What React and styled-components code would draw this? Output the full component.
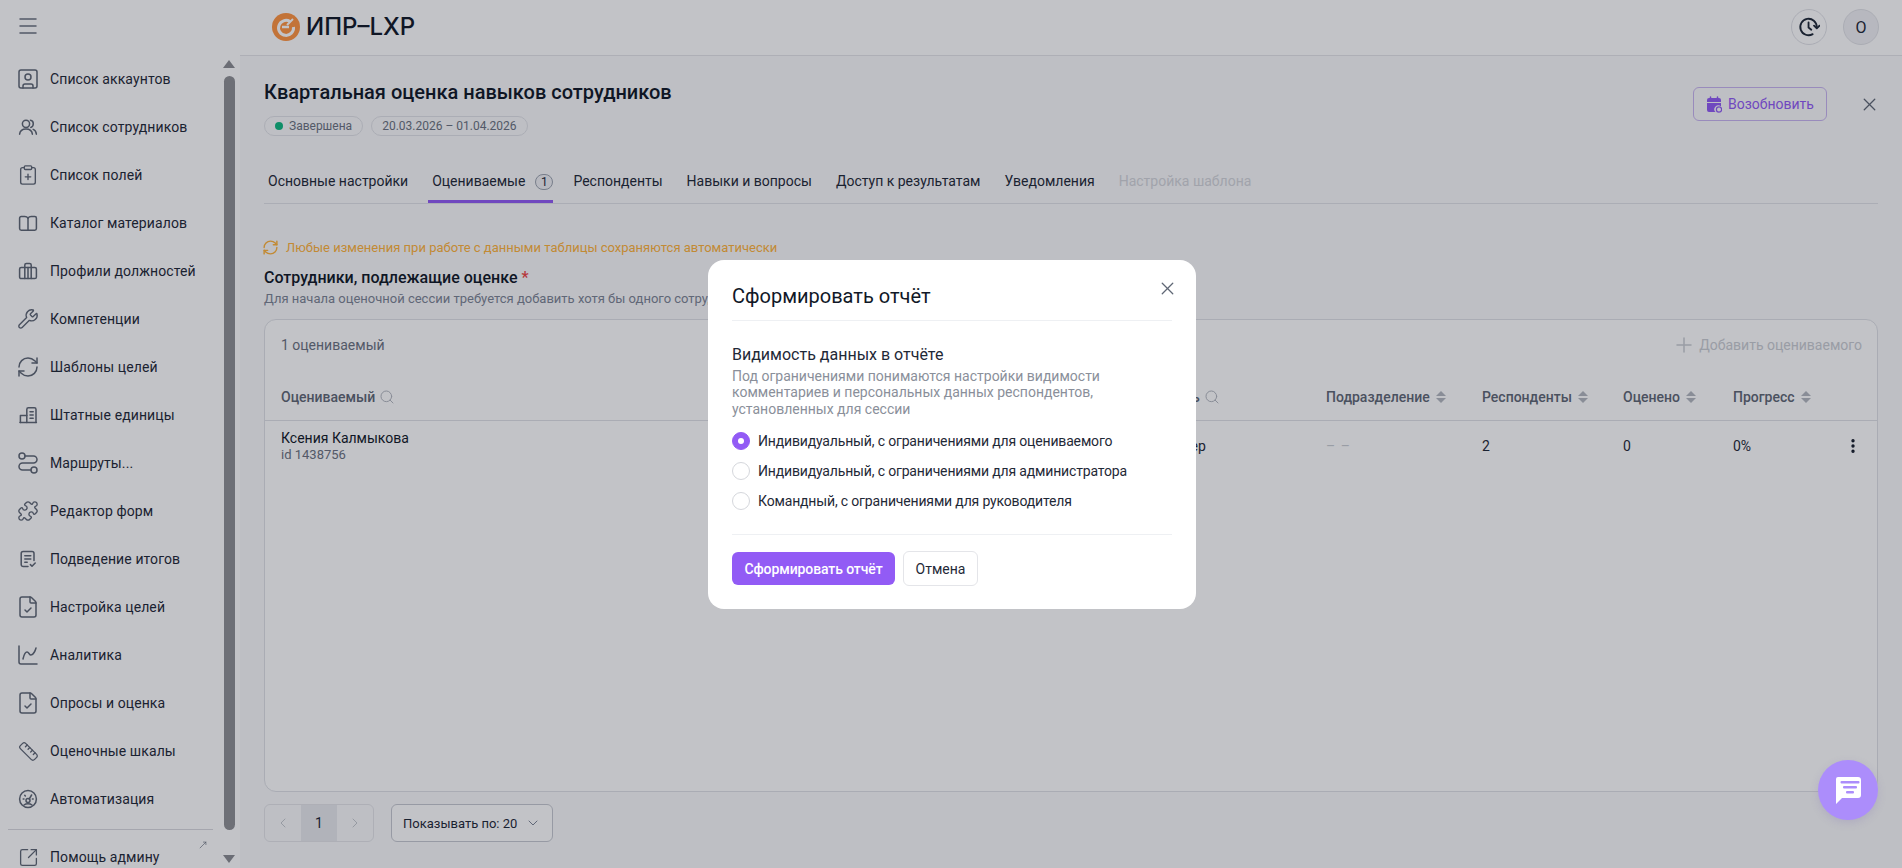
import React from 'react';
import styled, { createGlobalStyle } from 'styled-components';
import {
  ChartSpline,
  ChevronDown,
  ChevronLeft,
  ChevronRight,
  ClipboardPlus,
  EllipsisVertical,
  FileCheck,
  Menu,
  MoveUpRight,
  Plus,
  Puzzle,
  RefreshCw,
  Route,
  Ruler,
  Search,
  SquareArrowOutUpRight,
  SquareUser,
  Wrench,
  X,
} from 'lucide-react';

const GlobalStyle = createGlobalStyle`
  html, body {
    margin: 0;
    height: 100%;
    overflow: hidden;
    font-family: Roboto, "Noto Sans", sans-serif;
    color: #111827;
    background: #fff;
  }
  * { box-sizing: border-box; }
`;

const Layout = styled.div`
  display: grid;
  grid-template-columns: 240px 1fr;
  height: 868px;
  overflow: hidden;
`;

const Sidebar = styled.aside`
  display: flex;
  flex-direction: column;
  height: 868px;
  background: #fff;
  overflow: hidden;
`;

const SideTop = styled.div`
  height: 55px;
  flex: none;
  padding: 14px 0 0 16px;
  color: #6b7280;
`;

const SideBody = styled.div`
  display: flex;
  flex: 1;
  min-height: 0;
`;

const Nav = styled.nav`
  width: 222px;
  flex: none;
`;

const NavItem = styled.a`
  display: flex;
  align-items: center;
  position: relative;
  gap: 10px;
  height: 48px;
  padding-left: 16px;
  font-size: 14px;
  color: #1f2937;
  letter-spacing: 0.1px;
  svg { flex: none; color: #5f6775; }
`;

const IconSlot = styled.span`
  width: 24px;
  height: 24px;
  flex: none;
  display: flex;
  align-items: center;
  justify-content: center;
`;

const NavDivider = styled.div`
  height: 1px;
  margin: 6px 9px 3px 8px;
  background: #d8d9de;
`;

const NavCorner = styled.span`
  position: absolute;
  top: 7px;
  right: 14px;
  display: flex;
`;

const ScrollTrack = styled.div`
  width: 18px;
  display: flex;
  flex-direction: column;
  align-items: center;
  padding: 5px 4px 0 0;
`;

const ScrollArrow = styled.span`
  width: 0;
  height: 0;
  flex: none;
  border-left: 6.5px solid transparent;
  border-right: 6.5px solid transparent;
  border-bottom: ${(p) => (p.$down ? 'none' : '8px solid #8b8d92')};
  border-top: ${(p) => (p.$down ? '8px solid #8b8d92' : 'none')};
`;

const ScrollThumb = styled.div`
  width: 11px;
  height: 754px;
  flex: none;
  margin: 8px 0 25px;
  border-radius: 6px;
  background: #8f9095;
`;

const Main = styled.main`
  display: flex;
  flex-direction: column;
  min-width: 0;
  background: #fafafb;
`;

const Header = styled.header`
  height: 56px;
  flex: none;
  display: flex;
  align-items: center;
  justify-content: space-between;
  padding: 0 23px 1px 32px;
  background: #fff;
  border-bottom: 1px solid #e4e5e9;
`;

const Logo = styled.div`
  display: flex;
  align-items: center;
  gap: 6px;
`;

const LogoText = styled.span`
  font-family: Inter, Roboto, sans-serif;
  font-size: 24px;
  font-weight: 500;
  line-height: 28px;
  color: #111827;
`;

const HeaderActions = styled.div`
  display: flex;
  gap: 16px;
`;

const RoundButton = styled.div`
  width: 36px;
  height: 36px;
  display: flex;
  align-items: center;
  justify-content: center;
  border-radius: 50%;
  border: 1px solid #e0e1e6;
  background: ${(p) => (p.$filled ? '#f0f1f4' : '#fff')};
  color: #1f2937;
  font-size: 16px;
`;

const Content = styled.div`
  flex: 1;
  display: flex;
  flex-direction: column;
  padding: 24px 24px 0;
`;

const TitleRow = styled.div`
  display: flex;
  justify-content: space-between;
  align-items: flex-start;
`;

const Title = styled.h1`
  margin: 0;
  font-size: 20px;
  line-height: 24px;
  font-weight: 500;
  color: #111827;
`;

const Chips = styled.div`
  display: flex;
  gap: 8px;
  margin-top: 12px;
`;

const Chip = styled.span`
  display: inline-flex;
  align-items: center;
  gap: 6px;
  height: 20px;
  padding: 0 10px;
  border: 1px solid #e1e2e7;
  border-radius: 10px;
  font-size: 12px;
  color: #6b7280;
`;

const Dot = styled.i`
  width: 8px;
  height: 8px;
  border-radius: 50%;
  background: #10b981;
`;

const TitleActions = styled.div`
  display: flex;
  align-items: center;
  gap: 32px;
  margin: 7px -2px 0 0;
  color: #5f6775;
`;

const ResumeButton = styled.button`
  display: flex;
  align-items: center;
  gap: 6px;
  width: 134px;
  height: 34px;
  padding: 0 12px;
  border: 1px solid #c9b5f0;
  border-radius: 6px;
  background: transparent;
  font: 14px Roboto, sans-serif;
  color: #925bf5;
`;

const Tabs = styled.div`
  display: flex;
  height: 44px;
  margin-top: 24px;
  border-bottom: 1px solid #e1e2e7;
`;

const Tab = styled.div`
  display: flex;
  align-items: flex-start;
  gap: 10px;
  height: 43px;
  margin-right: 16px;
  padding: 13px ${(p) => (p.$active ? '0' : '4px')} 0 4px;
  font-size: 14px;
  line-height: 16px;
  color: ${(p) => (p.$disabled ? '#d3d5da' : '#1f2937')};
  border-bottom: 3px solid ${(p) => (p.$active ? '#925bf5' : 'transparent')};
`;

const TabCount = styled.span`
  width: 18px;
  height: 16px;
  margin-top: 1px;
  display: flex;
  align-items: center;
  justify-content: center;
  border: 1px solid #9ca3af;
  border-radius: 9px;
  font-size: 12px;
  background: #f0f1f4;
`;

const Notice = styled.div`
  display: flex;
  align-items: center;
  gap: 7px;
  margin: 33px 0 0 -2px;
  height: 20px;
  font-size: 13px;
  color: #ffb33b;
`;

const SectionTitle = styled.h2`
  margin: 11px 0 0;
  font-size: 16px;
  line-height: 20px;
  font-weight: 500;
  color: #111827;
  em { color: #ef4444; font-style: normal; }
`;

const SectionHint = styled.p`
  margin: 3px 0 12px;
  font-size: 13px;
  line-height: 16px;
  color: #7c8494;
`;

const TableCard = styled.section`
  height: 473px;
  flex: none;
  background: #fff;
  border: 1px solid #dfe1e6;
  border-radius: 12px;
`;

const CardBar = styled.div`
  height: 49px;
  display: flex;
  align-items: center;
  justify-content: space-between;
  padding: 0 15px 0 16px;
  font-size: 14px;
  color: #6b7280;
`;

const AddButton = styled.span`
  display: flex;
  align-items: center;
  gap: 3px;
  color: #c9ccd2;
`;

const TableRow = styled.div`
  display: grid;
  grid-template-columns: 843px 202px 156px 141px 110px 1fr;
  align-items: center;
  padding-left: 16px;
  height: ${(p) => p.$height}px;
  border-bottom: ${(p) => (p.$head ? '1px solid #dfe1e6' : 'none')};
  font-size: 14px;
  font-weight: ${(p) => (p.$head ? 500 : 400)};
  color: ${(p) => (p.$head ? '#5f6775' : '#1f2937')};
`;

const HeadCell = styled.span`
  display: flex;
  align-items: center;
  gap: 4px;
  padding-top: 5px;
  svg { color: #b3b7bf; }
`;

const SortMark = styled.span`
  display: flex;
  flex-direction: column;
  gap: 2px;
  margin-left: 2px;
  &::before, &::after {
    content: '';
    width: 0;
    height: 0;
    border-left: 5px solid transparent;
    border-right: 5px solid transparent;
  }
  &::before { border-bottom: 5px solid #b3b7bf; }
  &::after { border-top: 5px solid #b3b7bf; }
`;

const PersonName = styled.div`
  font-size: 14px;
  line-height: 16px;
  color: #111827;
`;

const PersonId = styled.div`
  margin-top: 1px;
  font-size: 13px;
  line-height: 16px;
  color: #6b7280;
`;

const Muted = styled.span`
  color: #c9ccd2;
  letter-spacing: 1px;
`;

const ProgressRow = styled.div`
  display: flex;
  align-items: center;
  justify-content: space-between;
`;

const RowMenu = styled.span`
  display: flex;
  justify-content: flex-end;
  padding-right: 15px;
  color: #111827;
`;

const Footer = styled.div`
  display: flex;
  gap: 17px;
  margin-top: 12px;
`;

const Pager = styled.div`
  display: flex;
  width: 110px;
  height: 38px;
  border: 1px solid #e4e5e9;
  border-radius: 6px;
  overflow: hidden;
  color: #c5c8ce;
`;

const PageCell = styled.span`
  flex: 1;
  display: flex;
  align-items: center;
  justify-content: center;
  font-size: 14px;
  color: ${(p) => (p.$current ? '#1f2937' : 'inherit')};
  background: ${(p) => (p.$current ? '#e9eaee' : 'transparent')};
`;

const PageSize = styled.div`
  display: flex;
  align-items: center;
  gap: 8px;
  width: 162px;
  height: 38px;
  padding: 0 11px;
  white-space: nowrap;
  background: #fff;
  border: 1px solid #c6c9d0;
  border-radius: 6px;
  font-size: 13px;
  color: #1f2937;
  svg { flex: none; color: #7c8494; }
`;

const Overlay = styled.div`
  position: fixed;
  inset: 0;
  z-index: 10;
  display: flex;
  align-items: center;
  justify-content: center;
  padding-left: 2px;
  background: rgba(11, 15, 31, 0.25);
`;

const Modal = styled.div`
  position: relative;
  width: 488px;
  height: 349px;
  padding: 20px 24px 0;
  background: #fff;
  border-radius: 16px;
`;

const ModalClose = styled.span`
  position: absolute;
  top: 18px;
  right: 18px;
  display: flex;
  color: #5f6775;
`;

const ModalTitle = styled.h3`
  margin: 0;
  height: 41px;
  font-size: 20px;
  line-height: 32px;
  font-weight: 400;
  color: #111827;
  border-bottom: 1px solid #eef0f3;
`;

const FieldLabel = styled.div`
  margin-top: 24px;
  font-size: 16px;
  line-height: 20px;
  color: #1f2937;
`;

const FieldHint = styled.p`
  margin: 3px 0 0;
  font-size: 14px;
  line-height: 16.5px;
  color: #8a8f9a;
`;

const RadioList = styled.div`
  display: flex;
  flex-direction: column;
  gap: 12px;
  margin-top: 15px;
`;

const RadioRow = styled.label`
  display: flex;
  align-items: center;
  gap: 8px;
  height: 18px;
  font-size: 14px;
  letter-spacing: -0.16px;
  color: #1f2937;
`;

const RadioMark = styled.span`
  width: 18px;
  height: 18px;
  flex: none;
  display: flex;
  align-items: center;
  justify-content: center;
  border-radius: 50%;
  border: 1px solid ${(p) => (p.$checked ? '#925bf5' : '#d5d7dc')};
  background: ${(p) => (p.$checked ? '#925bf5' : '#fff')};
  &::after {
    content: '';
    width: 6px;
    height: 6px;
    border-radius: 50%;
    background: ${(p) => (p.$checked ? '#fff' : 'transparent')};
  }
`;

const ModalFooter = styled.div`
  display: flex;
  align-items: center;
  gap: 8px;
  margin-top: 24px;
  padding-top: 16px;
  border-top: 1px solid #eef0f3;
`;

const PrimaryButton = styled.button`
  width: 163px;
  height: 33px;
  padding: 0;
  border: none;
  border-radius: 6px;
  background: #925bf5;
  color: #fff;
  font: 500 14px Roboto, sans-serif;
  letter-spacing: -0.1px;
`;

const CancelButton = styled.button`
  width: 75px;
  height: 35px;
  background: #fff;
  border: 1px solid #e4e5e9;
  border-radius: 6px;
  color: #1f2937;
  font: 14px Roboto, sans-serif;
`;

const ChatFab = styled.div`
  position: fixed;
  right: 24px;
  bottom: 48px;
  z-index: 20;
  width: 60px;
  height: 60px;
  display: flex;
  align-items: center;
  justify-content: center;
  border-radius: 50%;
  background: #ac8dfb;
  box-shadow: 0 3px 8px rgba(120, 100, 180, 0.2);
`;

const MirrorRoute = styled(Route)`
  transform: scaleX(-1);
`;

const line = { fill: 'none', stroke: 'currentColor', strokeWidth: 1.9, strokeLinecap: 'round', strokeLinejoin: 'round' };

const NavSvg = ({ children }) => (
  <svg width="24" height="24" viewBox="-3 -3 30 30" {...line}>
    {children}
  </svg>
);

const PeopleIcon = () => (
  <NavSvg>
    <circle cx="9.5" cy="8" r="4.5" />
    <path d="M1.5 21c.5-4.500 3.800-6.500 8-6.500s7.500 2 8 6.500" />
    <path d="M15 3.500c2.300.3 3.600 2.200 3.600 4.500s-1.300 4-3.100 4.500" />
    <path d="M18.500 15c2.300.8 3.700 3 4 6" />
  </NavSvg>
);

const BriefcaseIcon = () => (
  <NavSvg>
    <rect x="1.500" y="7.500" width="21" height="14" rx="2" />
    <path d="M8 21.500V4.500a2 2 0 0 1 2-2h4a2 2 0 0 1 2 2v17" />
    <path d="M12 7.500v14" />
  </NavSvg>
);

const CatalogIcon = () => (
  <NavSvg>
    <path d="M12 6c-1-1.500-2.500-2-4-2H3.500A2 2 0 0 0 1.500 6v13a2 2 0 0 0 2 2h17a2 2 0 0 0 2-2V6a2 2 0 0 0-2-2H16c-1.500 0-3 .5-4 2Z" />
    <path d="M12 6v15" />
  </NavSvg>
);

const UnitsIcon = () => (
  <NavSvg>
    <path d="M2 21.500h20.500" />
    <path d="M2.500 21.500V12.500h8" />
    <path d="M10.500 21.500V5a2 2 0 0 1 2-2h7.500a2 2 0 0 1 2 2v16.500" />
    <path d="M14.500 8h4M14.500 12h4M14.500 16h4" />
  </NavSvg>
);

const SummaryIcon = () => (
  <NavSvg>
    <path d="M12 21.500H6a2.500 2.500 0 0 1-2.500-2.500V5A2.500 2.500 0 0 1 6 2.500h11A2.500 2.500 0 0 1 19.500 5v9" />
    <path d="M8 8h7.500M8 12h7.500M8 16h3" />
    <path d="m15 19 2 2 4-4" />
  </NavSvg>
);

const AutomationIcon = () => (
  <NavSvg>
    <circle cx="12" cy="12" r="10.500" />
    <circle cx="12" cy="14" r="2.500" />
    <path d="m13.500 12 3-5" />
    <path d="M6 12h1M17.500 12h1M8 7.500l.7.7" />
    <path d="M7 19.500c1.500-1.200 3-1.500 5-1.500s3.500.3 5 1.500" />
  </NavSvg>
);

const LucideNav = ({ as: Icon, size = 24 }) => (
  <IconSlot>
    <Icon size={size} strokeWidth={1.5} />
  </IconSlot>
);

const navItems = [
  ['Список аккаунтов', <LucideNav as={SquareUser} />],
  ['Список сотрудников', <PeopleIcon />],
  ['Список полей', <LucideNav as={ClipboardPlus} size={22} />],
  ['Каталог материалов', <CatalogIcon />],
  ['Профили должностей', <BriefcaseIcon />],
  ['Компетенции', <LucideNav as={Wrench} size={22} />],
  ['Шаблоны целей', <LucideNav as={RefreshCw} />],
  ['Штатные единицы', <UnitsIcon />],
  ['Маршруты...', <LucideNav as={MirrorRoute} />],
  ['Редактор форм', <LucideNav as={Puzzle} size={22} />],
  ['Подведение итогов', <SummaryIcon />],
  ['Настройка целей', <LucideNav as={FileCheck} />],
  ['Аналитика', <LucideNav as={ChartSpline} />],
  ['Опросы и оценка', <LucideNav as={FileCheck} />],
  ['Оценочные шкалы', <LucideNav as={Ruler} size={21} />],
  ['Автоматизация', <AutomationIcon />],
];

const tabs = ['Респонденты', 'Навыки и вопросы', 'Доступ к результатам', 'Уведомления'];
const columns = ['Подразделение', 'Респонденты', 'Оценено', 'Прогресс'];
const radios = [
  'Индивидуальный, с ограничениями для оцениваемого',
  'Индивидуальный, с ограничениями для администратора',
  'Командный, с ограничениями для руководителя',
];

const LogoMark = () => (
  <svg width="28" height="28" viewBox="0 0 28 28">
    <circle cx="14" cy="14" r="14" fill="#ff9440" />
    <path d="M18 8.500A7.500 7.500 0 1 0 21.500 14" fill="none" stroke="#fff" strokeWidth="3" />
    <path d="M10 14h7" stroke="#fff" strokeWidth="2.500" />
    <path d="m15 12 6-6" stroke="#fff" strokeWidth="2" />
  </svg>
);

const HistoryIcon = () => (
  <svg width="22" height="22" viewBox="0 0 24 24" fill="none" stroke="currentColor" strokeWidth="2" strokeLinecap="round" strokeLinejoin="round">
    <path d="M20.500 12A9 9 0 1 0 16 19.800" />
    <path d="M11.500 7v5.500l3 2.500" />
    <path d="m17.500 10.500 3 3 3-3" />
  </svg>
);

const CalendarIcon = () => (
  <svg width="16" height="17" viewBox="0 0 16 17">
    <path d="M1 4a2 2 0 0 1 2-2h10a2 2 0 0 1 2 2v2H1Z" fill="#925bf5" />
    <path d="M1 7h14v3.500A3.500 3.500 0 0 0 9.500 16H3a2 2 0 0 1-2-2Z" fill="#925bf5" />
    <path d="M4.500 1v3M11.500 1v3" stroke="#925bf5" strokeWidth="1.500" strokeLinecap="round" />
    <circle cx="13" cy="13.500" r="2.600" fill="none" stroke="#925bf5" strokeWidth="1.200" />
  </svg>
);

const ChatIcon = () => (
  <svg width="32" height="32" viewBox="0 0 32 32">
    <path d="M6 3h20a3 3 0 0 1 3 3v15a3 3 0 0 1-3 3H10l-6 6V5a2 2 0 0 1 2-2Z" fill="#fff" />
    <rect x="8.500" y="7" width="19" height="2.500" rx="1" fill="#ac8dfb" />
    <rect x="11" y="12" width="14" height="2.500" rx="1" fill="#ac8dfb" />
    <rect x="14" y="17" width="8" height="2.500" rx="1" fill="#ac8dfb" />
  </svg>
);

export default function App() {
  return (
    <>
      <GlobalStyle />
      <Layout>
        <Sidebar>
          <SideTop>
            <Menu size={24} strokeWidth={1.5} />
          </SideTop>
          <SideBody>
            <Nav>
              {navItems.map(([label, icon]) => (
                <NavItem key={label}>
                  {icon}
                  {label}
                </NavItem>
              ))}
              <NavDivider />
              <NavItem>
                <LucideNav as={SquareArrowOutUpRight} size={21} />
                Помощь админу
                <NavCorner>
                  <MoveUpRight size={10} strokeWidth={1.5} />
                </NavCorner>
              </NavItem>
            </Nav>
            <ScrollTrack>
              <ScrollArrow />
              <ScrollThumb />
              <ScrollArrow $down />
            </ScrollTrack>
          </SideBody>
        </Sidebar>

        <Main>
          <Header>
            <Logo>
              <LogoMark />
              <LogoText>ИПР–LXP</LogoText>
            </Logo>
            <HeaderActions>
              <RoundButton>
                <HistoryIcon />
              </RoundButton>
              <RoundButton $filled>О</RoundButton>
            </HeaderActions>
          </Header>

          <Content>
            <TitleRow>
              <div>
                <Title>Квартальная оценка навыков сотрудников</Title>
                <Chips>
                  <Chip>
                    <Dot />
                    Завершена
                  </Chip>
                  <Chip>20.03.2026 – 01.04.2026</Chip>
                </Chips>
              </div>
              <TitleActions>
                <ResumeButton>
                  <CalendarIcon />
                  Возобновить
                </ResumeButton>
                <X size={21} strokeWidth={1.5} />
              </TitleActions>
            </TitleRow>

            <Tabs>
              <Tab>Основные настройки</Tab>
              <Tab $active>
                Оцениваемые
                <TabCount>1</TabCount>
              </Tab>
              {tabs.map((tab) => (
                <Tab key={tab}>{tab}</Tab>
              ))}
              <Tab $disabled>Настройка шаблона</Tab>
            </Tabs>

            <Notice>
              <RefreshCw size={17} strokeWidth={2} />
              Любые изменения при работе с данными таблицы сохраняются автоматически
            </Notice>
            <SectionTitle>
              Сотрудники, подлежащие оценке <em>*</em>
            </SectionTitle>
            <SectionHint>
              Для начала оценочной сессии требуется добавить хотя бы одного сотрудника
            </SectionHint>

            <TableCard>
              <CardBar>
                1 оцениваемый
                <AddButton>
                  <Plus size={24} strokeWidth={1.5} />
                  Добавить оцениваемого
                </AddButton>
              </CardBar>
              <TableRow $head $height={52}>
                <HeadCell>
                  Оцениваемый
                  <Search size={16} strokeWidth={1.5} />
                </HeadCell>
                <HeadCell>
                  Должность
                  <Search size={16} strokeWidth={1.5} />
                </HeadCell>
                {columns.map((col) => (
                  <HeadCell key={col}>
                    {col}
                    <SortMark />
                  </HeadCell>
                ))}
              </TableRow>
              <TableRow $height={50}>
                <div>
                  <PersonName>Ксения Калмыкова</PersonName>
                  <PersonId>id 1438756</PersonId>
                </div>
                <span>IT-менеджер</span>
                <Muted>– –</Muted>
                <span>2</span>
                <span>0</span>
                <ProgressRow>
                  0%
                  <RowMenu>
                    <EllipsisVertical size={18} strokeWidth={2.5} />
                  </RowMenu>
                </ProgressRow>
              </TableRow>
            </TableCard>

            <Footer>
              <Pager>
                <PageCell>
                  <ChevronLeft size={16} strokeWidth={1.5} />
                </PageCell>
                <PageCell $current>1</PageCell>
                <PageCell>
                  <ChevronRight size={16} strokeWidth={1.5} />
                </PageCell>
              </Pager>
              <PageSize>
                Показывать по: 20
                <ChevronDown size={16} strokeWidth={1.5} />
              </PageSize>
            </Footer>
          </Content>
        </Main>
      </Layout>

      <Overlay>
        <Modal>
          <ModalClose>
            <X size={21} strokeWidth={1.5} />
          </ModalClose>
          <ModalTitle>Сформировать отчёт</ModalTitle>
          <FieldLabel>Видимость данных в отчёте</FieldLabel>
          <FieldHint>
            Под ограничениями понимаются настройки видимости
            <br />
            комментариев и персональных данных респондентов,
            <br />
            установленных для сессии
          </FieldHint>
          <RadioList>
            {radios.map((label, i) => (
              <RadioRow key={label}>
                <RadioMark $checked={i === 0} />
                {label}
              </RadioRow>
            ))}
          </RadioList>
          <ModalFooter>
            <PrimaryButton>Сформировать отчёт</PrimaryButton>
            <CancelButton>Отмена</CancelButton>
          </ModalFooter>
        </Modal>
      </Overlay>

      <ChatFab>
        <ChatIcon />
      </ChatFab>
    </>
  );
}
